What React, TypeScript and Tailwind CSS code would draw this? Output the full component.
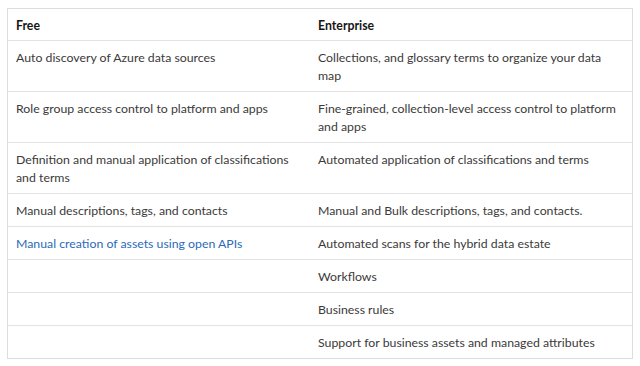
const rows: { free: string; enterprise: string; link?: boolean }[] = [
  { free: 'Auto discovery of Azure data sources', enterprise: 'Collections, and glossary terms to organize your data map' },
  { free: 'Role group access control to platform and apps', enterprise: 'Fine-grained, collection-level access control to platform and apps' },
  { free: 'Definition and manual application of classifications and terms', enterprise: 'Automated application of classifications and terms' },
  { free: 'Manual descriptions, tags, and contacts', enterprise: 'Manual and Bulk descriptions, tags, and contacts.' },
  { free: 'Manual creation of assets using open APIs', enterprise: 'Automated scans for the hybrid data estate', link: true },
  { free: '', enterprise: 'Workflows' },
  { free: '', enterprise: 'Business rules' },
  { free: '', enterprise: 'Support for business assets and managed attributes' },
];

export default function App() {
  return (
    <div className="w-[640px] h-[366px] bg-white pt-[8px] pl-[7px] font-['Lato','Liberation_Sans',sans-serif] text-[12.3px] leading-[18px] text-[#3b3a39]">
      <div className="w-[626px] border border-[#dcdcdc]">
        {/* Header */}
        <div className="grid grid-cols-[302px_1fr] font-bold text-[#161616]">
          <div className="px-[8px] pt-[8px] pb-[5px]">Free</div>
          <div className="px-[8px] pt-[8px] pb-[5px]">Enterprise</div>
        </div>

        {rows.map((r, i) => (
          <div key={i} className="grid grid-cols-[302px_1fr] border-t border-[#e3e3e3]">
            <div className={`px-[8px] pt-[8px] pb-[6px] ${r.link ? 'text-[#2a6bb8]' : ''}`}>{r.free}</div>
            <div className="px-[8px] pt-[8px] pb-[6px]">{r.enterprise}</div>
          </div>
        ))}
      </div>
    </div>
  );
}
